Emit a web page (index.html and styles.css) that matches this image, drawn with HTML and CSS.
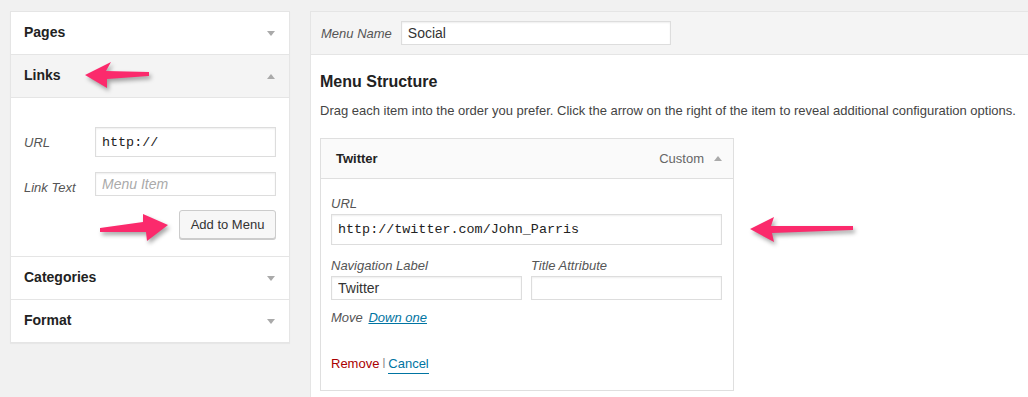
FILE: index.html
```html
<!DOCTYPE html>
<html lang="en">
<head>
<meta charset="UTF-8">
<title>Menus</title>
<link rel="stylesheet" href="styles.css">
</head>
<body>
    <div class="wrap">
        <div class="sidebar">
            <div class="acc">
                <div class="acc-head"><span>Pages</span><i class="tri down"></i></div>
            </div>
            <div class="acc open">
                <div class="acc-head"><span>Links</span><i class="tri up"></i></div>
                <div class="acc-body">
                    <div class="row">
                        <label class="lbl">URL</label>
                        <input class="field mono tall" type="text" value="http://">
                    </div>
                    <div class="row">
                        <label class="lbl low">Link Text</label>
                        <input class="field" type="text" placeholder="Menu Item">
                    </div>
                    <div class="actions">
                        <button class="btn">Add to Menu</button>
                    </div>
                </div>
            </div>
            <div class="acc">
                <div class="acc-head"><span>Categories</span><i class="tri down"></i></div>
            </div>
            <div class="acc last">
                <div class="acc-head"><span>Format</span><i class="tri down"></i></div>
            </div>
        </div>

        <div class="editor">
            <div class="editor-head">
                <label class="lbl name-lbl">Menu Name</label>
                <input class="field name-field" type="text" value="Social">
            </div>
            <div class="editor-body">
                <h3>Menu Structure</h3>
                <p class="hint">Drag each item into the order you prefer. Click the arrow on the right of the item to reveal additional configuration options.</p>

                <div class="item">
                    <div class="item-head">
                        <span class="item-title">Twitter</span>
                        <span class="item-type">Custom</span>
                        <i class="tri up"></i>
                    </div>
                    <div class="item-body">
                        <label class="lbl">URL</label>
                        <input class="field mono url-field" type="text" value="http://twitter.com/John_Parris">
                        <div class="cols">
                            <div class="col">
                                <label class="lbl">Navigation Label</label>
                                <input class="field" type="text" value="Twitter">
                            </div>
                            <div class="col">
                                <label class="lbl">Title Attribute</label>
                                <input class="field" type="text">
                            </div>
                        </div>
                        <div class="move"><span class="lbl">Move</span> <a href="#">Down one</a></div>
                        <div class="item-actions">
                            <a class="remove" href="#">Remove</a><span class="sep">|</span><a class="cancel" href="#">Cancel</a>
                        </div>
                    </div>
                </div>
            </div>
        </div>
    </div>

    <!-- setas de destaque -->
    <svg class="arrows" width="1028" height="397" viewBox="0 0 1028 397">
        <polygon points="85,75 111,62 106,71 149,72 149,76 107,79 107,88" />
        <polygon points="100,228 143,222 143,214 168,225 147,241 146,232 100,232" />
        <polygon points="750,229 774,217 771,226 853,226 853,230 772,233 774,242" />
    </svg>
</body>
</html>
```

FILE: styles.css
```css
body {
    margin: 0;
    background-color: #f1f1f1;
    font-family: "Liberation Sans", Arial, sans-serif;
    font-size: 13px;
    color: #333;
    overflow: hidden;
    position: relative;
    height: 397px;
}

.wrap {
    display: flex;
    align-items: flex-start;
    padding: 11px 0 0 10px;
}

/* coluna da esquerda */
.sidebar {
    flex: 0 0 280px;
    box-sizing: border-box;
    background-color: #fff;
    border: 1px solid #e5e5e5;
    box-shadow: 0 1px 1px rgba(0, 0, 0, 0.04);
}

.acc {
    border-bottom: 1px solid #e5e5e5;
}

.acc.last {
    border-bottom: none;
}

.acc-head {
    box-sizing: border-box;
    height: 42px;
    display: flex;
    align-items: center;
    justify-content: space-between;
    padding: 0 14px 2px 13px;
    font-size: 14px;
    font-weight: bold;
    color: #222;
}

.acc-head .tri {
    position: relative;
    top: 1px;
}

.acc.open .acc-head {
    background-color: #f4f4f4;
    border-bottom: 1px solid #e5e5e5;
    height: 43px;
}

.tri {
    display: inline-block;
    width: 0;
    height: 0;
    border-left: 4px solid transparent;
    border-right: 4px solid transparent;
}

.tri.down {
    border-top: 5px solid #aaa;
}

.tri.up {
    border-bottom: 5px solid #aaa;
}

.acc-body {
    padding: 29px 13px 17px 13px;
}

.row {
    display: flex;
    align-items: center;
    margin-bottom: 15px;
}

.lbl {
    font-style: italic;
    color: #555;
    font-size: 13px;
}

.row .lbl {
    flex: 0 0 71px;
}

.row .lbl.low {
    position: relative;
    top: 3px;
}

.field {
    box-sizing: border-box;
    height: 24px;
    border: 1px solid #ddd;
    box-shadow: inset 0 1px 2px rgba(0, 0, 0, 0.07);
    background-color: #fff;
    font-family: "Liberation Sans", Arial, sans-serif;
    font-size: 14px;
    color: #333;
    padding: 0 6px;
    outline: none;
}

.row .field {
    width: 181px;
}

.field::placeholder {
    color: #aaa;
    font-style: italic;
}

.field.mono {
    font-family: "Liberation Mono", "Courier New", monospace;
    font-size: 13.4px;
    color: #222;
}

.field.tall {
    height: 30px;
}

.actions {
    display: flex;
    justify-content: flex-end;
    margin-top: -1px;
}

.btn {
    width: 97px;
    height: 29px;
    background-color: #f7f7f7;
    border: 1px solid #ccc;
    border-radius: 3px;
    box-shadow: 0 1px 0 #ccc;
    font-family: "Liberation Sans", Arial, sans-serif;
    font-size: 13px;
    color: #333;
    padding: 0;
}

/* editor do menu */
.editor {
    flex: 0 0 760px;
    margin-left: 20px;
    background-color: #fff;
    border: 1px solid #e5e5e5;
    height: 400px;
}

.editor-head {
    height: 42px;
    display: flex;
    align-items: center;
    padding-left: 10px;
    background-color: #f4f4f4;
    border-bottom: 1px solid #e5e5e5;
}

.name-lbl {
    margin-right: 9px;
}

.name-field {
    width: 270px;
    padding-left: 6px;
}

.editor-body {
    padding: 17px 10px 0 9px;
}

h3 {
    margin: 0;
    font-size: 16px;
    line-height: 20px;
    color: #222;
}

.hint {
    margin: 10px 0 18px;
    line-height: 18px;
    color: #444;
}

.item {
    width: 414px;
    box-sizing: border-box;
    border: 1px solid #dfdfdf;
}

.item-head {
    height: 39px;
    display: flex;
    align-items: center;
    padding: 0 11px 0 15px;
    background-color: #fafafa;
    border-bottom: 1px solid #dfdfdf;
}

.item-title {
    font-weight: bold;
    color: #222;
    flex: 1;
}

.item-type {
    color: #666;
    margin-right: 10px;
}

.item-body {
    padding: 17px 11px 18px 10px;
}

.item-body .lbl {
    display: block;
    line-height: 16px;
}

.url-field {
    display: block;
    width: 391px;
    height: 31px;
    margin-top: 2px;
}

.cols {
    display: flex;
    gap: 9px;
    margin-top: 13px;
}

.col {
    flex: 0 0 191px;
}

.col .field {
    width: 191px;
    margin-top: 2px;
}

.move {
    margin-top: 9px;
    line-height: 18px;
}

.move .lbl {
    display: inline;
}

.move a {
    color: #0074a2;
    font-style: italic;
    margin-left: 2px;
}

.item-actions {
    margin-top: 27px;
    line-height: 16px;
}

.remove {
    color: #a00;
    text-decoration: none;
}

.sep {
    color: #777;
    font-size: 11px;
    margin: 0 3px;
    vertical-align: 2px;
}

.cancel {
    color: #0074a2;
    text-decoration: none;
    border-bottom: 1px solid #0074a2;
    padding-bottom: 2px;
}

.arrows {
    position: absolute;
    left: 0;
    top: 0;
    pointer-events: none;
}

.arrows polygon {
    fill: #fb2a6c;
    filter: drop-shadow(2px 3px 2px rgba(0, 0, 0, 0.35));
}
```
